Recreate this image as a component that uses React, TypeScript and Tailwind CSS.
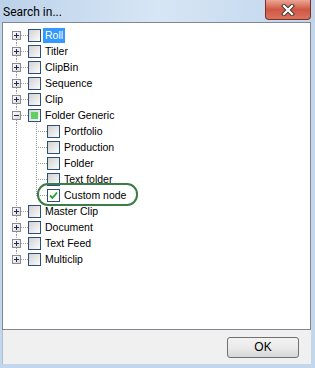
import React from 'react';

type Node = {
  label: string;
  level: 0 | 1;
  state?: 'none' | 'partial' | 'checked';
  expander?: 'plus' | 'minus';
  selected?: boolean;
  first?: boolean;
  last?: boolean;
};

const NODES: Node[] = [
  { label: 'Roll', level: 0, expander: 'plus', selected: true, first: true },
  { label: 'Titler', level: 0, expander: 'plus' },
  { label: 'ClipBin', level: 0, expander: 'plus' },
  { label: 'Sequence', level: 0, expander: 'plus' },
  { label: 'Clip', level: 0, expander: 'plus' },
  { label: 'Folder Generic', level: 0, expander: 'minus', state: 'partial' },
  { label: 'Portfolio', level: 1 },
  { label: 'Production', level: 1 },
  { label: 'Folder', level: 1 },
  { label: 'Text folder', level: 1 },
  { label: 'Custom node', level: 1, state: 'checked', last: true },
  { label: 'Master Clip', level: 0, expander: 'plus' },
  { label: 'Document', level: 0, expander: 'plus' },
  { label: 'Text Feed', level: 0, expander: 'plus' },
  { label: 'Multiclip', level: 0, expander: 'plus', last: true },
];

const DOT = '#a0a0a0';

// connector lines + expander box, drawn per row
const Connectors = ({ node }: { node: Node }) => {
  if (node.level === 0) {
    return (
      <svg width="25" height="16" className="shrink-0" shapeRendering="crispEdges">
        {!node.first && <line x1="13.5" y1="0" x2="13.5" y2="4" stroke={DOT} strokeDasharray="1 1" />}
        {!node.last && <line x1="13.5" y1="13" x2="13.5" y2="16" stroke={DOT} strokeDasharray="1 1" />}
        <line x1="18" y1="8.5" x2="25" y2="8.5" stroke={DOT} strokeDasharray="1 1" />
        <defs>
          <linearGradient id="exp" x1="0" y1="0" x2="1" y2="1">
            <stop offset="0" stopColor="#ffffff" />
            <stop offset="1" stopColor="#d6d6d6" />
          </linearGradient>
        </defs>
        <rect x="9.5" y="4.5" width="8" height="8" fill="url(#exp)" stroke="#8c8c8c" />
        <line x1="11" y1="8.5" x2="16" y2="8.5" stroke="#1d2b5c" />
        {node.expander === 'plus' && <line x1="13.5" y1="6" x2="13.5" y2="11" stroke="#1d2b5c" />}
      </svg>
    );
  }
  return (
    <svg width="44" height="16" className="shrink-0" shapeRendering="crispEdges">
      <line x1="13.5" y1="0" x2="13.5" y2="16" stroke={DOT} strokeDasharray="1 1" />
      <line x1="33.5" y1="0" x2="33.5" y2={node.last ? 9 : 16} stroke={DOT} strokeDasharray="1 1" />
      <line x1="35" y1="8.5" x2="44" y2="8.5" stroke={DOT} strokeDasharray="1 1" />
    </svg>
  );
};

const CheckBox = ({ state = 'none' }: { state?: Node['state'] }) => (
  <div
    className={
      'w-[13px] h-[13px] shrink-0 border border-[#2c4f7c] flex items-center justify-center ' +
      (state === 'checked' ? 'bg-white' : 'bg-gradient-to-br from-[#d2d2d2] to-[#fbfbfb]')
    }
  >
    {state === 'partial' && <div className="w-[7px] h-[7px] bg-[#62cf62]" />}
    {state === 'checked' && (
      <svg width="9" height="9" viewBox="0 0 9 9">
        <path d="M1 4.5 L3.5 7 L8 1.5" fill="none" stroke="#22a22a" strokeWidth="1.8" />
      </svg>
    )}
  </div>
);

const TreeRow = ({ node }: { node: Node }) => (
  <div className="flex h-4 items-center">
    <Connectors node={node} />
    <CheckBox state={node.state} />
    <span
      className={
        'ml-[2px] h-[15px] leading-[15px] px-[2px] whitespace-nowrap ' +
        (node.selected ? 'bg-[#3399ff] text-white' : 'text-black')
      }
    >
      {node.label}
    </span>
  </div>
);

export default function App() {
  return (
    <div className="w-[315px] h-[368px] bg-[#c3d7ec] flex flex-col font-['Liberation_Sans',Arial,sans-serif] text-[10.5px] overflow-hidden">
      <div className="h-[22px] flex items-start bg-gradient-to-r from-[#bcd2ea] via-[#d7e6f5] to-[#c0d5ec]">
        <span className="pl-[3px] pt-[5px] text-[12px] leading-[14px] text-black font-['Roboto','Liberation_Sans',sans-serif]">
          Search in...
        </span>
        <div className="ml-auto mr-[4px] w-[46px] h-[20px] rounded-b-[4px] border border-t-0 border-[#7d2f26] bg-gradient-to-b from-[#eaa795] via-[#cf5743] to-[#d9735e] flex items-center justify-center">
          <svg width="16" height="12" viewBox="0 0 16 12">
            <path d="M4 2 L12 10 M12 2 L4 10" stroke="#4a3a38" strokeWidth="4.2" strokeLinecap="square" />
            <path d="M4 2 L12 10 M12 2 L4 10" stroke="#ffffff" strokeWidth="2.2" strokeLinecap="square" />
          </svg>
        </div>
      </div>
      <div className="flex-1 flex flex-col pl-[2px] pr-[4px] pb-[4px]">
        <div className="h-[308px] border border-[#828790] bg-white relative">
          <div className="pt-[4px] flex flex-col">
            {NODES.map((n) => (
              <TreeRow key={n.label} node={n} />
            ))}
          </div>
          {/* highlight around the checked node */}
          <div className="absolute left-[34px] top-[160px] w-[101px] h-[23px] rounded-[11px] border-2 border-[#3b7c47]" />
        </div>
        <div className="flex-1 bg-[#f0f0f0] border-l border-[#a9bdd3] flex justify-end items-start pt-[7px] pr-[12px]">
          <button className="w-[72px] h-[21px] rounded-[3px] border border-[#707070] bg-gradient-to-b from-[#f2f2f2] via-[#ebebeb] to-[#d6d6d6] text-[12px] leading-[19px] text-black">
            OK
          </button>
        </div>
      </div>
    </div>
  );
}
